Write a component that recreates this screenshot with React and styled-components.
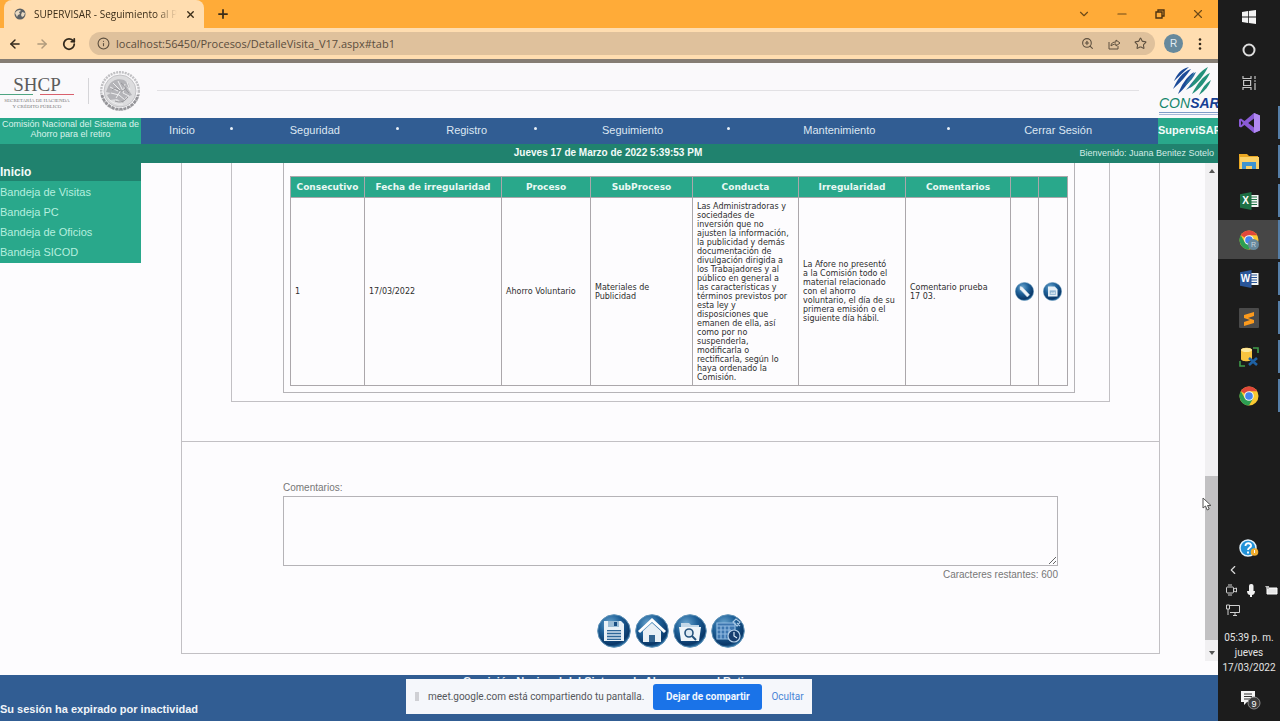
import React from "react";
import styled, { createGlobalStyle } from "styled-components";
import {
  ArrowLeft, ArrowRight, RotateCw, Info, ZoomIn, Star, ChevronDown, ChevronLeft, Minus, X, Plus,
} from "lucide-react";

const GlobalStyle = createGlobalStyle`
  *, *::before, *::after { box-sizing: border-box; }
  html, body { margin: 0; background: #fdfcfe; }
  body { font-family: "Liberation Sans", Arial, sans-serif; font-size: 11px; color: #444; }
  button { font: inherit; border: 0; padding: 0; background: none; color: inherit; cursor: pointer; }
  a { color: inherit; text-decoration: none; }
  svg { display: block; flex: none; }
`;

const Desktop = styled.div`display: flex; min-height: 100vh;`;
const Browser = styled.div`flex: 1; min-width: 0; display: flex; flex-direction: column;`;

/* ---------- Browser chrome ---------- */
const TabStrip = styled.div`
  display: flex; align-items: center; height: 28px; padding-left: 4px; background: #ffab38; color: #3a2c18;
`;
const Tab = styled.div`
  display: flex; align-items: center; gap: 8px; width: 200px; height: 28px; padding: 0 8px 0 10px;
  border-radius: 8px 8px 0 0; background: #ffddb0;
  font-family: "Open Sans", "Noto Sans", sans-serif; font-size: 10px;
`;
const TabTitle = styled.span`
  flex: 1; overflow: hidden; white-space: nowrap;
  mask-image: linear-gradient(to right, #000 85%, transparent);
`;
const NewTab = styled.button`margin-left: 12px;`;
const WindowControls = styled.div`
  display: flex; gap: 24px; margin-left: auto; padding-right: 13px; color: #6e4a18;
  button { width: 14px; display: flex; justify-content: center; align-items: center; }
`;
const Toolbar = styled.div`
  display: flex; align-items: center; gap: 13px; height: 35px; padding: 0 16px 0 8px;
  background: #ffddb0; border-bottom: 4px solid #857d74; color: #3a2c18;
`;
const ToolButton = styled.button`color: ${(p) => (p.$dim ? "#b09a7c" : "#33291c")};`;
const AddressBar = styled.div`
  flex: 1; display: flex; align-items: center; height: 23px; padding: 0 8px; gap: 6px;
  border-radius: 12px; background: #dfc19c; color: #5d4f3e;
`;
const AddressInput = styled.input`
  flex: 1; min-width: 0; border: 0; padding: 0; background: none; outline: 0; color: #5b4d3c;
  font-family: "Open Sans", "Noto Sans", sans-serif; font-size: 11px;
`;
const AddressActions = styled.div`display: flex; gap: 13px;`;
const Avatar = styled.button`
  width: 19px; height: 19px; margin: 0 2px 0 -4px; border-radius: 50%; background: #67899c; color: #e4edf2;
  font-size: 10px; line-height: 19px; text-align: center;
`;

/* ---------- Site header ---------- */
const SiteHeader = styled.header`
  display: flex; align-items: center; height: 55px; background: #faf9fb; overflow: hidden;
`;
const Ministry = styled.div`
  width: 74px; padding-top: 5px; display: flex; flex-direction: column; align-items: center;
  font-family: "Liberation Serif", serif; color: #666; white-space: nowrap;
`;
const MinistryName = styled.span`font-size: 19px; line-height: 18px; color: #5c5c5c;`;
const FlagLine = styled.span`
  width: 100%; height: 1px; margin-bottom: 3px;
  background: linear-gradient(to right, #4ea582 0 45%, transparent 45% 54%, #d9606d 54%);
`;
const MinistryDetail = styled.span`font-size: 5px; line-height: 6px; color: #777;`;
const HeaderSplit = styled.span`width: 1px; height: 26px; margin: 0 10px 0 14px; background: #d5d5d8;`;
const HeaderRule = styled.span`flex: 1; height: 1px; margin: 0 20px 0 16px; background: #e2e1e4;`;
const Consar = styled.div`width: 59px; height: 50px; display: flex; flex-direction: column; white-space: nowrap;`;
const ConsarName = styled.span`
  font-size: 14px; line-height: 13px; font-style: italic; font-weight: 700; color: #163f94;
  span { font-weight: 400; color: #14866c; }
`;
const ConsarDetail = styled.span`height: 3px; margin-top: 2px; border-top: 1px solid #7f9cc8; border-bottom: 1px solid #a6b9d8;`;

const NavBar = styled.nav`display: flex; height: 26px; background: #315d93; color: #dde7f2;`;
const Agency = styled.div`
  width: 141px; padding-top: 1px; background: #29a88b; color: #d9f3ec; font-size: 9px; line-height: 10px;
  white-space: nowrap; display: flex; flex-direction: column; align-items: center;
`;
const NavItem = styled.a`
  flex: ${(p) => p.$grow} 1 0; display: flex; align-items: center; text-align: center;
  span { flex: 1; line-height: 24px; padding-bottom: 2px; }
  &[data-menu="true"]::after { content: ""; width: 3px; height: 3px; margin: 0 8px 5px 7px; border-radius: 50%; background: #e9f0f7; }
`;
const SystemName = styled.div`
  width: 60px; overflow: hidden; background: #29a88b; color: #f2fbf9; font-weight: 700; line-height: 24px;
`;
const StatusBar = styled.div`
  display: grid; grid-template-columns: 1fr auto 1fr; align-items: center; height: 19px; padding: 0 4px 2px 2px;
  background: #20826e; color: #d3ece6; font-size: 9px;
  strong { color: #f3fbf9; font-size: 10px; }
  span { grid-column: 3; justify-self: end; }
`;

/* ---------- Page body ---------- */
const Body = styled.div`display: flex; flex: 1; background: #fdfcfe;`;
const Sidebar = styled.nav`
  width: 141px; height: 100px; align-self: flex-start; background: #29a88b; color: #b5efdf;
  h2 { margin: 0 0 1px; background: #20826e; color: #f3fbf9; font-size: 12px; line-height: 18px; }
  a { display: block; line-height: 20px; }
`;
const Panel = styled.main`
  flex: 1; min-width: 0; align-self: flex-start; margin: 0 45px 21px 40px;
  border: 1px solid #c2c0c4; border-top: 0;
`;
const Section = styled.section`padding: 0 49px 39px; border-bottom: 1px solid #c2c0c4;`;
const Group = styled.div`padding: 0 34px 8px 51px; border: 1px solid #c2c0c4; border-top: 0;`;
const Frame = styled.div`padding: 13px 8px 6px 6px; border: 1px solid #b5b3b7; border-top: 0;`;

const Table = styled.table`
  width: 100%; table-layout: fixed; border-collapse: collapse; color: #2e2e2e;
  font-family: "DejaVu Sans", Verdana, sans-serif; font-size: 8px; line-height: 9px;
  th, td { border: 1px solid #aba7ab; }
  th { height: 21px; padding: 0; background: #29a88b; color: #eaf8f4; font-size: 9px; white-space: nowrap; }
  td { height: 188px; padding: 0 0 0 4px; text-align: left; vertical-align: middle; white-space: pre-line; }
`;
const RowAction = styled.button`display: block;`;

const CommentForm = styled.form`padding: 39px 101px 5px; font-size: 10px; color: #777;`;
const Label = styled.label`display: block; margin-bottom: 1px; line-height: 14px;`;
const CommentBox = styled.textarea`
  display: block; width: 100%; height: 70px; border: 1px solid #b5b3b7; background: #fdfcfe; resize: vertical;
`;
const Counter = styled.div`line-height: 18px; text-align: right;`;
const Actions = styled.div`display: flex; justify-content: center; gap: 4px; padding-top: 30px;`;

const Scrollbar = styled.div`
  position: relative; width: 13px; margin-bottom: 14px; display: flex; flex-direction: column; align-items: center;
  background: #f1f0f2;
`;
const ScrollArrow = styled.span`
  margin: 6px 0; border: 3px solid transparent;
  ${(p) => (p.$up ? "border-top: 0; border-bottom: 4px solid #555;" : "border-bottom: 0; border-top: 4px solid #555;")}
`;
const TrackSpace = styled.span`flex: ${(p) => p.$grow};`;
const Thumb = styled.span`flex: 165; width: 100%; background: #c2c1c3;`;
const Pointer = styled.svg`position: absolute; left: -3px; top: 67%;`;

const Footer = styled.footer`
  position: relative; height: 46px; background: #315d93; color: #f0f4f9; font-weight: 700;
`;
const FooterTitle = styled.div`text-align: center; line-height: 12px;`;
const FooterNote = styled.div`margin-top: 14px; line-height: 16px;`;
const ShareBar = styled.div`
  position: absolute; left: 50%; bottom: 7px; transform: translateX(-50%); width: 406px; height: 35px;
  display: flex; align-items: center; gap: 9px; padding: 0 9px; background: #f5f7fb; color: #55585c;
  font: 400 10px Roboto, "Open Sans", sans-serif; white-space: nowrap;
`;
const Grip = styled.span`width: 5px; height: 9px; border: solid #cfd0d4; border-width: 0 2px;`;
const StopButton = styled.button`
  flex: none; width: 109px; height: 26px; margin-left: auto; border-radius: 3px; background: #1a73e8; color: #f2f7fe; font-weight: 700;
`;
const HideButton = styled.button`color: #4a86d6;`;

/* ---------- Windows taskbar ---------- */
const Taskbar = styled.aside`
  width: 62px; display: flex; flex-direction: column; background: #1c1c1c; color: #d8d8d8;
`;
const SystemGroup = styled.div`margin-bottom: 4px;`;
const Slot = styled.button`
  display: flex; align-items: center; justify-content: center; width: 100%; height: ${(p) => (p.$app ? "39px" : "33px")};
  background-color: ${(p) => (p.$active ? "#464646" : "transparent")};
  ${(p) => p.$app && `
    background-image: linear-gradient(#567fa8, #567fa8);
    background-size: 2px ${p.$active ? "39px" : "33px"};
    background-position: right center;
    background-repeat: no-repeat;
  `}
`;
const Tray = styled.div`margin-top: auto; display: flex; flex-direction: column; align-items: flex-start;`;
const TrayHelp = styled.span`margin: 0 0 2px 21px;`;
const TrayLine = styled.div`display: flex; align-items: center; gap: 10px; height: 20px; padding-left: 8px;`;
const Clock = styled.time`
  width: 100%; margin-top: 10px; text-align: center; white-space: nowrap; color: #e4e4e4;
  font-family: Roboto, "Open Sans", sans-serif; font-size: 10px; line-height: 15px;
  span { display: block; }
`;
const Notice = styled.button`margin: 15px 0 11px 22px;`;

/* ---------- Drawings ---------- */
const Globe = () => (
  <svg width="12" height="12" viewBox="0 0 12 12">
    <circle cx="6" cy="6" r="5.5" fill="#5b6064" />
    <path d="M1 5c1-2 3-3 5-3l1 1-2 1 1 2-2 1-1 2zM8 4l3 1-1 3-2 1-1-2z" fill="#e8d9c2" />
  </svg>
);
const ShareIcon = () => (
  <svg width="14" height="14" viewBox="0 0 14 14" fill="none" stroke="currentColor">
    <path d="M2 5v7h9V9M4 9c0-3 2-4 5-4V3l4 3-4 3V7C7 7 5 8 4 9z" />
  </svg>
);
const RestoreIcon = () => (
  <svg width="10" height="10" viewBox="0 0 10 10" fill="none" stroke="#4c3210" strokeWidth="1.4">
    <path d="M1 3h6v6H1zM3 3V1h6v6H7" />
  </svg>
);
const MoreIcon = () => (
  <svg width="4" height="12" viewBox="0 0 4 12" fill="#33291c">
    <circle cx="2" cy="1.5" r="1.3" /><circle cx="2" cy="6" r="1.3" /><circle cx="2" cy="10.5" r="1.3" />
  </svg>
);
const Seal = () => (
  <svg width="42" height="42" viewBox="0 0 42 42" fill="none">
    <circle cx="21" cy="21" r="18.8" stroke="#c0c0c3" strokeWidth="2.4" strokeDasharray="2 .9" />
    <path d="M3 25a18.5 18.5 0 0 0 36 0" stroke="#949498" strokeWidth="2.6" strokeDasharray="3 1" />
    <circle cx="21" cy="21" r="16" fill="#dcdcde" stroke="#c2c2c5" />
    <path d="M9 17c3-7 10-9 16-7l5 4 1 5-4-3 6 9-6 2-3 6-6-4-7 1-3-5 4-2-5-1z" fill="#b4b4b8" />
    <path d="M11 17l8 4M14 13l8 8M19 11l5 10M26 14l-2 9 6 3M12 23l8 2 6 5M17 28l5-8M9 28c4 5 9 7 15 6M28 12l3 8" stroke="#efeff0" />
    <path d="M13 20c5-5 8 5 13-1M16 31c5 2 9 1 13-4M22 13c5 3 4 7 8 10" stroke="#97979b" />
  </svg>
);
const ConsarMark = () => (
  <svg width="58" height="31" viewBox="0 0 58 31">
    <g fill="#1b4a98">
      <path d="M15 15C18 9 21 3 30 1C25 6 20 10 15 15z" />
      <path d="M14 23C18 14 23 6 32 3C27 10 21 17 14 23z" />
      <path d="M19 28C22 20 27 11 35 6C32 14 26 22 19 28z" />
    </g>
    <g fill="#2b6f9f">
      <path d="M26 20C28 14 32 8 37 6C35 11 31 16 26 20z" />
      <path d="M27 24C31 20 35 12 41 10C38 16 33 21 27 24z" />
    </g>
    <g fill="#23917a">
      <path d="M31 22C35 13 41 5 49 1C45 9 39 17 31 22z" />
      <path d="M33 28C38 18 44 10 51 7C47 15 41 23 33 28z" />
      <path d="M40 29C43 22 47 17 52 14C50 20 46 25 40 29z" />
    </g>
  </svg>
);
const Orb = ({ size, children }) => {
  const id = React.useId();
  return (
    <svg width={size} height={size} viewBox="0 0 34 34">
      <defs>
        <radialGradient id={id} cx="38%" cy="28%" r="75%">
          <stop offset="0" stopColor="#6aa5ce" /><stop offset=".45" stopColor="#1f6199" />
          <stop offset=".85" stopColor="#0a3768" /><stop offset="1" stopColor="#2b73a8" />
        </radialGradient>
      </defs>
      <circle cx="17" cy="17" r="16.3" fill={`url(#${id})`} stroke="#5d91b7" strokeWidth="1" />
      {children}
    </svg>
  );
};
const SaveGlyph = () => (
  <g>
    <path d="M7 7h17l3 3v17H7z" fill="#e9f1f7" />
    <path d="M11 7h11v6H11z" fill="#9bbdd6" /><path d="M17 8h3v4h-3z" fill="#184e83" />
    <path d="M10 16h14v10H10z" fill="#2d6698" />
    <path d="M10 18h14M10 21h14M10 24h14" stroke="#cfe0ed" strokeWidth="1.6" />
  </g>
);
const HomeGlyph = () => (
  <g>
    <path d="M8 17v11h6v-7h6v7h6V17l-9-8z" fill="#e9f0f5" />
    <path d="M4 18L17 6l13 12" fill="none" stroke="#fff" strokeWidth="3" />
    <path d="M14 21h6v7h-6z" fill="#33648f" />
  </g>
);
const SearchFolderGlyph = () => (
  <g>
    <path d="M8 9h8l2 2h8v4H8z" fill="#c3d8e8" /><path d="M6 13h22l-2 14H8z" fill="#eff5f9" />
    <circle cx="16" cy="19" r="4" fill="#dce9f2" stroke="#25537d" strokeWidth="1.6" />
    <path d="M19 22l4 4" stroke="#25537d" strokeWidth="2" />
  </g>
);
const AgendaGlyph = () => (
  <g fill="none" stroke="#8fb9e0" strokeWidth="1.2">
    <path d="M6 9h18v16H6z" fill="#3d76b0" /><path d="M6 12h18M6 16h14M6 20h12M10 12v13M14 12v13M18 12v9" />
    <circle cx="23" cy="22" r="6" fill="#173f70" stroke="#b7d1e9" /><path d="M23 18v4l3 2" stroke="#dcebf7" />
    <path d="M22 8l3-3 4 3-3 4zM26 9l3 3" stroke="#a9c9e6" />
  </g>
);
const PencilGlyph = () => <path d="M9 8l4 1 13 14-4 4L9 13z" fill="#f0f5f9" stroke="#b9cfe0" />;
const DocGlyph = () => (
  <g><path d="M9 8h12l5 5v13H9z" fill="#e6eff6" /><path d="M12 15h11v8H12z" fill="#8fb5d3" /><path d="M13 21l3-3 2 2 2-3 2 4z" fill="#e9f2f8" /></g>
);
const WindowsLogo = () => (
  <svg width="14" height="14" viewBox="0 0 14 14" fill="#f3f3f3">
    <path d="M0 2l6-.9v5.5H0zM6.8 1L14 0v6.6H6.8zM0 7.4h6v5.5L0 12zM6.8 7.4H14V14l-7.2-1z" />
  </svg>
);
const TaskView = () => (
  <svg width="15" height="14" viewBox="0 0 15 14" fill="none" stroke="#c4c4c4" strokeWidth="1.2">
    <path d="M1 0v2.5h8V0M1 14v-2.5h8V14M1.6 4.5h7v5h-7zM13 0v3M13 7v7M12 5h2" />
  </svg>
);
const VisualStudio = () => (
  <svg width="21" height="20" viewBox="0 0 21 20">
    <path d="M15 0l6 2.5v15L15 20 5.5 12 2 14.6 0 13.6V6.4l2-1L5.5 8zM15 5.6L9.2 10l5.8 4.4zM2 7.8v4.4L4 10z" fill="#8a5bd6" fillRule="evenodd" />
    <path d="M15 0l6 2.5v15L15 20z" fill="#b189f2" />
  </svg>
);
const Explorer = () => (
  <svg width="20" height="17" viewBox="0 0 20 17">
    <path d="M0 1h8l2 2h9v13H0z" fill="#eaa823" /><path d="M1 4h19v12H1z" fill="#fbd166" />
    <path d="M3 16V9h14v7h-4v-3H7v3z" fill="#3f94cf" />
  </svg>
);
const Office = ({ letter, color }) => (
  <svg width="19" height="18" viewBox="0 0 19 18">
    <path d="M9 3h9.5v12H9z" fill="#f2f5f4" />
    <path d="M11 5h6M11 7.5h6M11 10h6M11 12.5h6" stroke={color} />
    <path d="M0 2.2L11.5 0v18L0 15.8z" fill={color} />
    <text x="5.6" y="12.4" textAnchor="middle" fontFamily="Liberation Sans, sans-serif" fontWeight="700" fontSize="10" fill="#fff">{letter}</text>
  </svg>
);
const Chrome = ({ badge }) => (
  <svg width="20" height="20" viewBox="0 0 20 20">
    <circle cx="10" cy="10" r="9.5" fill="#f9c932" />
    <path d="M10 10L1.77 5.25A9.5 9.5 0 0 1 18.23 5.25H10z" fill="#e0483a" />
    <path d="M1.77 5.25A9.5 9.5 0 0 0 10 19.5l4.1-7.1L10 10 5.9 12.4z" fill="#2c9e52" />
    <circle cx="10" cy="10" r="4.8" fill="#f4f5f4" /><circle cx="10" cy="10" r="3.8" fill="#4484ee" />
    {badge && (
      <g>
        <circle cx="14.5" cy="14.5" r="5.5" fill="#67899c" />
        <text x="14.5" y="17" textAnchor="middle" fontFamily="Liberation Sans, sans-serif" fontSize="7" fill="#c8d6de">R</text>
      </g>
    )}
  </svg>
);
const Sublime = () => (
  <svg width="20" height="20" viewBox="0 0 20 20">
    <rect width="20" height="20" rx="1" fill="#4a4a4a" />
    <path d="M5 7l10-3v4l-6 2 6 2v3L5 18v-4l6-2-6-2z" fill="#fb9a1d" />
  </svg>
);
const DataTools = () => (
  <svg width="20" height="20" viewBox="0 0 20 20">
    <path d="M2 3c0-3 11-3 11 0v9c0 3-11 3-11 0z" fill="#f9c440" /><ellipse cx="7.5" cy="3" rx="5.5" ry="2" fill="#fde9a0" />
    <path d="M14 1h5v5M1 14v5h5" fill="none" stroke="#3f9a4a" strokeWidth="1.6" />
    <path d="M10 11l8 7M18 11l-8 7" stroke="#1f62a5" strokeWidth="2.6" />
  </svg>
);
const HelpTray = () => (
  <svg width="20" height="19" viewBox="0 0 20 19">
    <circle cx="9" cy="9" r="8" fill="#2292d8" stroke="#e4f2fb" strokeWidth="1.5" />
    <path d="M6.5 7c0-4 6-3.5 5.5 0-.3 1.7-3 2-3 4M9 12.5v2" fill="none" stroke="#fff" strokeWidth="1.9" />
    <circle cx="15.5" cy="13" r="3.8" fill="#f0ac2e" /><path d="M15.5 11v3" stroke="#fff" />
  </svg>
);
const MeetNow = () => (
  <svg width="11" height="12" viewBox="0 0 11 12" fill="none" stroke="#d0d0d0">
    <rect x=".5" y="3" width="7" height="6" rx="1" /><path d="M7.5 5l3-1v4l-3-1M2 1h4M2 11h4" />
  </svg>
);
const Mic = () => (
  <svg width="8" height="13" viewBox="0 0 8 13" fill="#f0f0f0">
    <rect x="2" width="4.5" height="9" rx="2" /><path d="M0 7h8c0 3-2 4-3 4v2H3v-2C2 11 0 10 0 7z" />
  </svg>
);
const Battery = () => (
  <svg width="13" height="10" viewBox="0 0 13 10">
    <path d="M2 3h10v6H2z" fill="#e6e6e6" stroke="#fff" /><path d="M0 1h4v3H2z" fill="#bbb" />
  </svg>
);
const Network = () => (
  <svg width="14" height="12" viewBox="0 0 14 12" fill="none" stroke="#d0d0d0">
    <path d="M4 1.5h9.5v7H4M7 11.5h4M9 8.5v3M.5 1h3v4h-3zM2 5v6" />
  </svg>
);
const NoticeIcon = () => (
  <svg width="22" height="20" viewBox="0 0 22 20">
    <path d="M1 1h14v11H7l-3 3v-3H1z" fill="#f4f4f4" /><path d="M4 4h8M4 6.5h8M4 9h6" stroke="#333" />
    <circle cx="14" cy="13" r="6" fill="#3b3b3b" stroke="#8a8a8a" />
    <text x="14" y="16.5" textAnchor="middle" fontFamily="Liberation Sans, sans-serif" fontSize="9" fill="#fff">9</text>
  </svg>
);

/* ---------- Data ---------- */
const menu = [
  ["Inicio", 100], ["Seguridad", 166], ["Registro", 138], ["Seguimiento", 194], ["Mantenimiento", 220], ["Cerrar Sesión", 200],
];
const trays = ["Bandeja de Visitas", "Bandeja PC", "Bandeja de Oficios", "Bandeja SICOD"];
const columns = [
  ["Consecutivo", 74], ["Fecha de irregularidad", 137], ["Proceso", 89], ["SubProceso", 102], ["Conducta", 106],
  ["Irregularidad", 107], ["Comentarios", 105], ["", 28], ["", 29],
];
const row = [
  "1", "17/03/2022", "Ahorro Voluntario", "Materiales de\nPublicidad",
  `Las Administradoras y
sociedades de
inversión que no
ajusten la información,
la publicidad y demás
documentación de
divulgación dirigida a
los Trabajadores y al
público en general a
las características y
términos previstos por
esta ley y
disposiciones que
emanen de ella, así
como por no
suspenderla,
modificarla o
rectificarla, según lo
haya ordenado la
Comisión.`,
  `La Afore no presentó
a la Comisión todo el
material relacionado
con el ahorro
voluntario, el día de su
primera emisión o el
siguiente día hábil.`,
  "Comentario prueba\n17 03.",
];
const formActions = [
  ["Guardar", <SaveGlyph />], ["Inicio", <HomeGlyph />], ["Consultar expediente", <SearchFolderGlyph />], ["Agenda", <AgendaGlyph />],
];
const apps = [
  ["Visual Studio", <VisualStudio />], ["Explorador", <Explorer />], ["Excel", <Office letter="X" color="#1d7044" />],
  ["Chrome R", <Chrome badge />, true], ["Word", <Office letter="W" color="#2a5699" />], ["Sublime Text", <Sublime />],
  ["SQL", <DataTools />], ["Chrome", <Chrome />],
];

export default function App() {
  return (
    <Desktop>
      <GlobalStyle />
      <Browser>
        <TabStrip>
          <Tab>
            <Globe />
            <TabTitle>SUPERVISAR - Seguimiento al Pro</TabTitle>
            <button aria-label="Cerrar pestaña"><X size={11} strokeWidth={3} /></button>
          </Tab>
          <NewTab aria-label="Nueva pestaña"><Plus size={14} strokeWidth={3} /></NewTab>
          <WindowControls>
            <button aria-label="Buscar pestañas"><ChevronDown size={14} /></button>
            <button aria-label="Minimizar"><Minus size={14} /></button>
            <button aria-label="Restaurar"><RestoreIcon /></button>
            <button aria-label="Cerrar"><X size={14} /></button>
          </WindowControls>
        </TabStrip>
        <Toolbar>
          <ToolButton aria-label="Atrás"><ArrowLeft size={14} strokeWidth={2.5} /></ToolButton>
          <ToolButton aria-label="Adelante" $dim><ArrowRight size={14} strokeWidth={2.5} /></ToolButton>
          <ToolButton aria-label="Recargar"><RotateCw size={14} strokeWidth={3} /></ToolButton>
          <AddressBar>
            <Info size={13} />
            <AddressInput aria-label="Dirección" defaultValue="localhost:56450/Procesos/DetalleVisita_V17.aspx#tab1" />
            <AddressActions>
              <button type="button" aria-label="Zoom"><ZoomIn size={13} /></button>
              <button type="button" aria-label="Compartir"><ShareIcon /></button>
              <button type="button" aria-label="Favorito"><Star size={13} /></button>
            </AddressActions>
          </AddressBar>
          <Avatar>R</Avatar>
          <ToolButton aria-label="Más opciones"><MoreIcon /></ToolButton>
        </Toolbar>

        <SiteHeader>
          <Ministry>
            <MinistryName>SHCP</MinistryName>
            <FlagLine />
            <MinistryDetail>SECRETARÍA DE HACIENDA</MinistryDetail>
            <MinistryDetail>Y CRÉDITO PÚBLICO</MinistryDetail>
          </Ministry>
          <HeaderSplit />
          <Seal />
          <HeaderRule />
          <Consar>
            <ConsarMark />
            <ConsarName><span>CON</span>SAR</ConsarName>
            <ConsarDetail />
          </Consar>
        </SiteHeader>
        <NavBar>
          <Agency><span>Comisión Nacional del Sistema de</span><span>Ahorro para el retiro</span></Agency>
          {menu.map(([name, grow], i) => (
            <NavItem key={name} href="#" $grow={grow} data-menu={i < menu.length - 1}><span>{name}</span></NavItem>
          ))}
          <SystemName>SuperviSAR</SystemName>
        </NavBar>
        <StatusBar>
          <i />
          <strong>Jueves 17 de Marzo de 2022 5:39:53 PM</strong>
          <span>Bienvenido: Juana Benitez Sotelo</span>
        </StatusBar>

        <Body>
          <Sidebar>
            <h2>Inicio</h2>
            {trays.map((t) => <a key={t} href="#">{t}</a>)}
          </Sidebar>
          <Panel>
            <Section>
              <Group>
                <Frame>
                  <Table>
                    <colgroup>{columns.map(([, w], i) => <col key={i} width={w} />)}</colgroup>
                    <thead><tr>{columns.map(([c], i) => <th key={i}>{c}</th>)}</tr></thead>
                    <tbody>
                      <tr>
                        {row.map((c, i) => <td key={i}>{c}</td>)}
                        <td><RowAction aria-label="Editar"><Orb size={19}><PencilGlyph /></Orb></RowAction></td>
                        <td><RowAction aria-label="Ver documento"><Orb size={19}><DocGlyph /></Orb></RowAction></td>
                      </tr>
                    </tbody>
                  </Table>
                </Frame>
              </Group>
            </Section>
            <CommentForm onSubmit={(e) => e.preventDefault()}>
              <Label htmlFor="comentarios">Comentarios:</Label>
              <CommentBox id="comentarios" />
              <Counter>Caracteres restantes: 600</Counter>
              <Actions>
                {formActions.map(([name, glyph]) => (
                  <button key={name} type="button" aria-label={name}><Orb size={34}>{glyph}</Orb></button>
                ))}
              </Actions>
            </CommentForm>
          </Panel>
          <Scrollbar>
            <ScrollArrow $up />
            <TrackSpace $grow={298} />
            <Thumb />
            <TrackSpace $grow={5} />
            <ScrollArrow />
            <Pointer width="10" height="14" viewBox="0 0 10 14">
              <path d="M1 1v10l2.5-2 1.7 4 2-1-1.7-3.5H9z" fill="#fff" stroke="#555" />
            </Pointer>
          </Scrollbar>
        </Body>
        <Footer>
          <FooterTitle>Comisión Nacional del Sistema de Ahorro para el Retiro</FooterTitle>
          <FooterNote>Su sesión ha expirado por inactividad</FooterNote>
          <ShareBar>
            <Grip />
            <span>meet.google.com está compartiendo tu pantalla.</span>
            <StopButton>Dejar de compartir</StopButton>
            <HideButton>Ocultar</HideButton>
          </ShareBar>
        </Footer>
      </Browser>

      <Taskbar>
        <SystemGroup>
          <Slot aria-label="Inicio de Windows"><WindowsLogo /></Slot>
          <Slot aria-label="Cortana">
            <svg width="14" height="14" viewBox="0 0 14 14"><circle cx="7" cy="7" r="5.5" fill="none" stroke="#dedede" strokeWidth="2" /></svg>
          </Slot>
          <Slot aria-label="Vista de tareas"><TaskView /></Slot>
        </SystemGroup>
        {apps.map(([name, icon, active]) => (
          <Slot key={name} aria-label={name} $app $active={active}>{icon}</Slot>
        ))}
        <Tray>
          <TrayHelp><HelpTray /></TrayHelp>
          <TrayLine><ChevronLeft size={14} /></TrayLine>
          <TrayLine><MeetNow /><Mic /><Battery /></TrayLine>
          <TrayLine><Network /></TrayLine>
          <Clock><span>05:39 p. m.</span><span>jueves</span><span>17/03/2022</span></Clock>
          <Notice aria-label="Notificaciones"><NoticeIcon /></Notice>
        </Tray>
      </Taskbar>
    </Desktop>
  );
}
